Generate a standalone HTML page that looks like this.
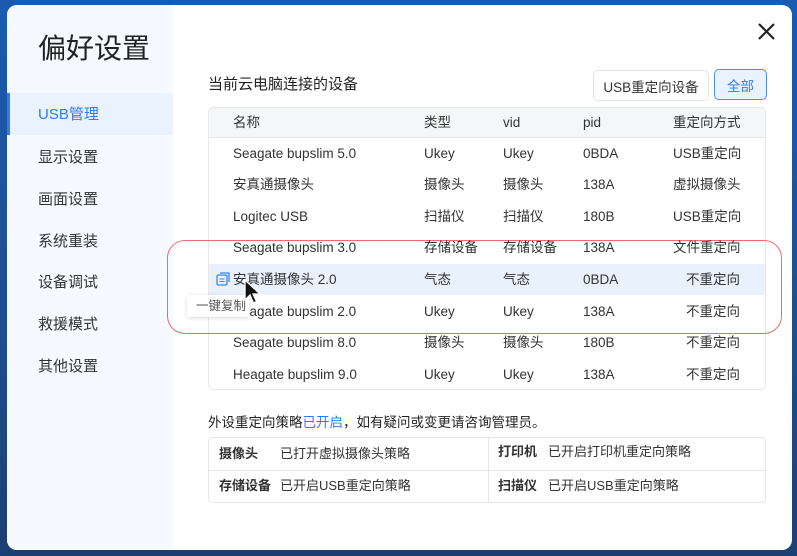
<!DOCTYPE html>
<html><head><meta charset="utf-8"><style>
*{margin:0;padding:0;box-sizing:border-box}
body{width:797px;height:556px;overflow:hidden;background:linear-gradient(180deg,#1a5bb0 0%,#1f4d8f 60%,#1c3f73 100%);font-family:"Liberation Sans","Noto Sans CJK SC",sans-serif;color:#222;position:relative}
.win{position:absolute;left:7px;top:5px;width:785px;height:545px;background:#fff;border-radius:10px;overflow:hidden}
.side{position:absolute;left:0;top:0;width:166px;height:100%;background:#f6faff}
.t{position:absolute;line-height:20px}
.title{left:31px;top:28px;font-size:28px;line-height:32px;color:#222}
.mi{position:absolute;left:31px;font-size:15px;line-height:18px;color:#333}
.act{position:absolute;left:0;top:88px;width:166px;height:42px;background:#eaf2fe;border-left:3px solid #2f7bf5}
.tbl{position:absolute;left:201px;top:102px;width:558px;height:283px;border:1px solid #e8e8e8;border-radius:5px;overflow:hidden}
.hd{position:absolute;left:0;top:0;width:100%;height:30px;background:#f5f6f7;border-bottom:1px solid #e6e6e6}
.c{position:absolute;font-size:13.5px;line-height:16px;color:#333;white-space:nowrap}
.btn{position:absolute;height:31px;border:1px solid #e3e3e3;border-radius:5px;font-size:13.5px;display:flex;align-items:center;justify-content:center;color:#333}
.bt{position:absolute;left:201px;top:432px;width:558px;height:66px;border:1px solid #e6e6e6;border-radius:4px}
.b{font-size:13px;line-height:16px;position:absolute;color:#333;white-space:nowrap}
</style></head><body>
<div class="win">
<div class="side"></div>
<div class="act"></div>
<div class="t title">偏好设置</div>
<div class="mi" style="top:101px;color:#2f7bf5">USB管理</div>
<div class="mi" style="top:144px">显示设置</div>
<div class="mi" style="top:186px">画面设置</div>
<div class="mi" style="top:228px">系统重装</div>
<div class="mi" style="top:269px">设备调试</div>
<div class="mi" style="top:311px">救援模式</div>
<div class="mi" style="top:353px">其他设置</div>
<svg style="position:absolute;left:750px;top:17px" width="19" height="19"><path d="M2 2L17 17M17 2L2 17" stroke="#222" stroke-width="2.2"/></svg>
<div class="t" style="left:201px;top:70px;font-size:15px;color:#222">当前云电脑连接的设备</div>
<div class="btn" style="left:586px;top:65px;width:116px">USB重定向设备</div>
<div class="btn" style="left:707px;top:64px;width:53px;background:#e9f2ff;border-color:#4c8df6;color:#2f7bf5">全部</div>
<div class="tbl">
<div class="hd"></div>
<div style="position:absolute;left:0;top:156px;width:100%;height:31px;background:#e9f1fd"></div>
</div>
<div class="t" style="left:201px;top:408px;font-size:13.5px;color:#222">外设重定向策略<span style="color:#2f7bf5">已开启</span>，如有疑问或变更请咨询管理员。</div>
<div class="bt">
<div style="position:absolute;left:0;top:32px;width:100%;border-top:1px solid #e6e6e6"></div>
<div style="position:absolute;left:279px;top:0;height:100%;border-left:1px solid #e6e6e6"></div>
</div>
</div>
<div class="b" style="left:219px;top:446px;font-weight:bold">摄像头</div><div class="b" style="left:280px;top:446px">已打开虚拟摄像头策略</div>
<div class="b" style="left:498px;top:444px;font-weight:bold">打印机</div><div class="b" style="left:548px;top:444px">已开启打印机重定向策略</div>
<div class="b" style="left:219px;top:478px;font-weight:bold">存储设备</div><div class="b" style="left:280px;top:478px">已开启USB重定向策略</div>
<div class="b" style="left:498px;top:478px;font-weight:bold">扫描仪</div><div class="b" style="left:548px;top:478px">已开启USB重定向策略</div>
<div style="position:absolute;left:167px;top:240px;width:615px;height:94px;border:1.8px solid #ef6b6b;border-radius:18px"></div>
<svg style="position:absolute;left:216px;top:272px" width="14" height="14"><rect x="1" y="3" width="10" height="10" rx="1.5" fill="none" stroke="#3a86f5" stroke-width="1.3"/><path d="M4 1H13V10" fill="none" stroke="#3a86f5" stroke-width="1.3"/><path d="M3.5 7H8.5M3.5 9.5H8.5" stroke="#3a86f5" stroke-width="1.1"/></svg>
<div style="position:absolute;left:0;top:0">
<div class="c" style="left:233px;top:115px">名称</div><div class="c" style="left:424px;top:115px">类型</div><div class="c" style="left:503px;top:115px">vid</div><div class="c" style="left:583px;top:115px">pid</div><div class="c" style="left:673px;top:115px">重定向方式</div>

<div class="c" style="left:233px;top:146px">Seagate bupslim 5.0</div><div class="c" style="left:424px;top:146px">Ukey</div><div class="c" style="left:503px;top:146px">Ukey</div><div class="c" style="left:583px;top:146px">0BDA</div><div class="c" style="left:673px;top:146px">USB重定向</div>
<div class="c" style="left:233px;top:177px">安真通摄像头</div><div class="c" style="left:424px;top:177px">摄像头</div><div class="c" style="left:503px;top:177px">摄像头</div><div class="c" style="left:583px;top:177px">138A</div><div class="c" style="left:673px;top:177px">虚拟摄像头</div>
<div class="c" style="left:233px;top:209px">Logitec USB</div><div class="c" style="left:424px;top:209px">扫描仪</div><div class="c" style="left:503px;top:209px">扫描仪</div><div class="c" style="left:583px;top:209px">180B</div><div class="c" style="left:673px;top:209px">USB重定向</div>
<div class="c" style="left:233px;top:240px">Seagate bupslim 3.0</div><div class="c" style="left:424px;top:240px">存储设备</div><div class="c" style="left:503px;top:240px">存储设备</div><div class="c" style="left:583px;top:240px">138A</div><div class="c" style="left:673px;top:240px">文件重定向</div>
<div class="c" style="left:233px;top:272px">安真通摄像头 2.0</div><div class="c" style="left:424px;top:272px">气态</div><div class="c" style="left:503px;top:272px">气态</div><div class="c" style="left:583px;top:272px">0BDA</div><div class="c" style="left:686px;top:272px">不重定向</div>
<div class="c" style="left:233px;top:304px">Seagate bupslim 2.0</div><div class="c" style="left:424px;top:304px">Ukey</div><div class="c" style="left:503px;top:304px">Ukey</div><div class="c" style="left:583px;top:304px">138A</div><div class="c" style="left:686px;top:304px">不重定向</div>
<div class="c" style="left:233px;top:335px">Seagate bupslim 8.0</div><div class="c" style="left:424px;top:335px">摄像头</div><div class="c" style="left:503px;top:335px">摄像头</div><div class="c" style="left:583px;top:335px">180B</div><div class="c" style="left:686px;top:335px">不重定向</div>
<div class="c" style="left:233px;top:367px">Heagate bupslim 9.0</div><div class="c" style="left:424px;top:367px">Ukey</div><div class="c" style="left:503px;top:367px">Ukey</div><div class="c" style="left:583px;top:367px">138A</div><div class="c" style="left:686px;top:367px">不重定向</div>
</div>
<div style="position:absolute;left:187px;top:295px;width:62px;height:22px;background:#fff;box-shadow:0 1px 4px rgba(0,0,0,.15);font-size:12.5px;line-height:16px;color:#555;padding:3px 0 0 9px">一键复制</div>
<svg style="position:absolute;left:243px;top:279px" width="20" height="28"><path d="M2 1L2 21L7 16L10.5 24L13.5 22.5L10 15L17 15Z" fill="#111" stroke="#fff" stroke-width="1.3"/></svg>
</body></html>
